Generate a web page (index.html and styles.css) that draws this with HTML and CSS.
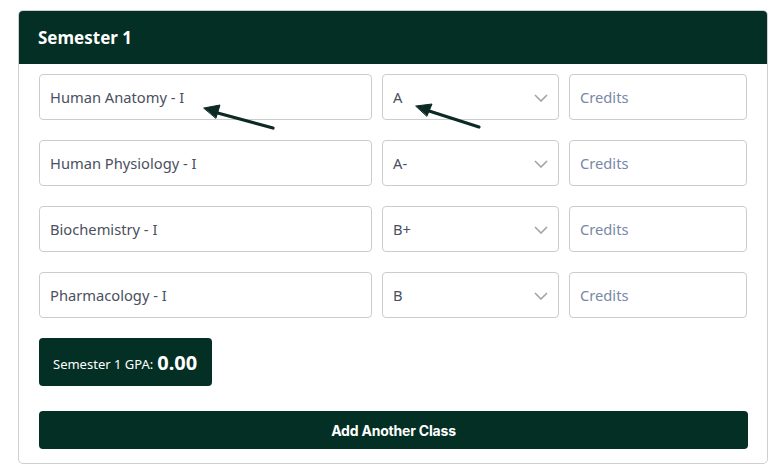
FILE: index.html
```html
<!DOCTYPE html>
<html>
<head>
<meta charset="utf-8">
<link rel="stylesheet" href="styles.css">
</head>
<body>
<div class="card">
  <div class="card-header">Semester 1</div>
  <div class="card-body">
    <div class="rows">
      <div class="row">
        <div class="field">Human Anatomy - I</div>
        <div class="field select">A<span class="chev"><svg width="14" height="8" viewBox="0 0 14 8"><path d="M1 1 L7 7 L13 1" fill="none" stroke="#a3a3a3" stroke-width="1.6"/></svg></span></div>
        <div class="field placeholder">Credits</div>
      </div>
      <div class="row">
        <div class="field">Human Physiology - I</div>
        <div class="field select">A-<span class="chev"><svg width="14" height="8" viewBox="0 0 14 8"><path d="M1 1 L7 7 L13 1" fill="none" stroke="#a3a3a3" stroke-width="1.6"/></svg></span></div>
        <div class="field placeholder">Credits</div>
      </div>
      <div class="row">
        <div class="field">Biochemistry - I</div>
        <div class="field select">B+<span class="chev"><svg width="14" height="8" viewBox="0 0 14 8"><path d="M1 1 L7 7 L13 1" fill="none" stroke="#a3a3a3" stroke-width="1.6"/></svg></span></div>
        <div class="field placeholder">Credits</div>
      </div>
      <div class="row">
        <div class="field">Pharmacology - I</div>
        <div class="field select">B<span class="chev"><svg width="14" height="8" viewBox="0 0 14 8"><path d="M1 1 L7 7 L13 1" fill="none" stroke="#a3a3a3" stroke-width="1.6"/></svg></span></div>
        <div class="field placeholder">Credits</div>
      </div>
    </div>
    <div class="gpa">Semester 1 GPA: <strong>0.00</strong></div>
    <div class="add-btn">Add Another Class</div>
  </div>
</div>
<svg class="arrows" width="778" height="476" viewBox="0 0 778 476">
  <g stroke="#0c2a23" stroke-width="3.2" stroke-linecap="round" fill="#0c2a23">
    <line x1="273" y1="128" x2="214" y2="112"/>
    <path d="M204 108 L220 105 L216 118 Z" stroke-width="1" stroke-linejoin="round"/>
    <line x1="479" y1="127" x2="426" y2="110"/>
    <path d="M416 106 L432 104 L427 116 Z" stroke-width="1" stroke-linejoin="round"/>
  </g>
</svg>
</body>
</html>
```
FILE: styles.css
```css
html, body {
  margin: 0;
  padding: 0;
  background: #fff;
}
body {
  padding: 10px 10px 0 18px;
  font-family: "Noto Sans", "Open Sans", sans-serif;
}
.card {
  width: 750px;
  box-sizing: border-box;
  border: 1px solid #cfcfcf;
  border-radius: 5px;
  overflow: hidden;
}
.card-header {
  background: #032f24;
  color: #fff;
  font-weight: 700;
  font-size: 17px;
  height: 53px;
  display: flex;
  align-items: center;
  padding-left: 19px;
}
.card-body {
  padding: 10px 19px 14px 20px;
}
.rows {
  display: flex;
  flex-direction: column;
  gap: 20px;
}
.row {
  display: grid;
  grid-template-columns: 333px 177px 178px;
  gap: 10px;
}
.field {
  height: 46px;
  box-sizing: border-box;
  border: 1px solid #cccccc;
  border-radius: 4px;
  display: flex;
  align-items: center;
  padding-left: 10px;
  padding-bottom: 1px;
  font-size: 14.7px;
  color: #4a5060;
  position: relative;
}
.field.placeholder {
  color: #7888a8;
}
.chev {
  position: absolute;
  right: 10px;
  top: 19px;
  display: flex;
}
.gpa {
  margin-top: 20px;
  display: inline-flex;
  align-items: center;
  height: 48px;
  box-sizing: border-box;
  padding: 4px 15px 0 14px;
  background: #032f24;
  color: #fff;
  border-radius: 4px;
  font-size: 13px;
  gap: 4px;
}
.gpa strong {
  font-size: 20px;
  font-weight: 700;
  position: relative;
  top: -2px;
}
.add-btn {
  margin-top: 25px;
  height: 38px;
  background: #032f24;
  color: #fff;
  border-radius: 4px;
  display: flex;
  align-items: center;
  justify-content: center;
  font-family: "Inter", sans-serif;
  font-weight: 700;
  font-size: 14px;
  letter-spacing: -0.2px;
}
.arrows {
  position: absolute;
  left: 0;
  top: 0;
  pointer-events: none;
}
```
